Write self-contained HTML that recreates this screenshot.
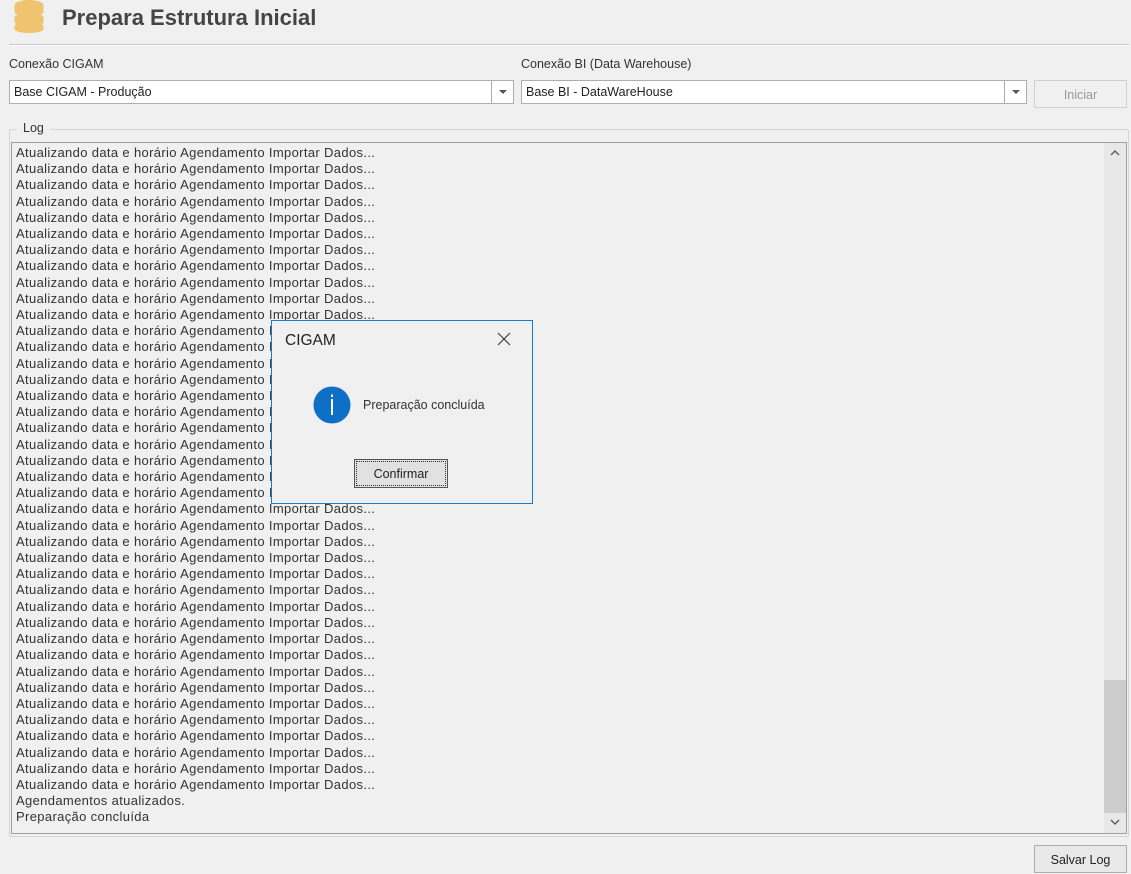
<!DOCTYPE html>
<html><head><meta charset="utf-8">
<style>
*{box-sizing:border-box;margin:0;padding:0}
body{width:1131px;height:874px;background:#f0f0f0;font-family:"Liberation Sans",sans-serif;font-size:12px;color:#222;position:relative;overflow:hidden}
.abs{position:absolute}
.title{left:62px;top:5px;font-size:22px;font-weight:bold;color:#444}
.hr{left:9px;top:44px;width:1120px;height:2px;border-top:1px solid #c8c8c8;border-bottom:1px solid #fff}
.lbl{font-size:12.5px;color:#333}
.combo{height:24px;background:#fff;border:1px solid #abadb3;font-size:12.5px;padding:4px 0 0 4px}
.combo .dd{position:absolute;right:0;top:0;width:22px;height:22px;border-left:1px solid #abadb3}
.combo .dd:after{content:"";position:absolute;left:7px;top:9px;border-left:4px solid transparent;border-right:4px solid transparent;border-top:4px solid #555}
.btn{border:1px solid #adadad;background:#e9e9e9;text-align:center;font-size:12.5px}
.log{left:11px;top:142px;width:1116px;height:692px;border:1px solid #a0a0a0;background:#f0f0f0}
.lines{position:absolute;left:4px;top:2px;line-height:16.2px;font-size:13px;letter-spacing:0.35px;color:#333;white-space:pre}
.sb{position:absolute;right:0;top:0;width:22px;height:690px;background:#e8e8e8}
</style></head><body>
<svg class="abs" style="left:14px;top:0px" width="30" height="34" viewBox="0 0 30 34">
<g fill="#efc36f"><ellipse cx="15" cy="5" rx="14.5" ry="5"/><rect x="0.5" y="5" width="29" height="7"/><ellipse cx="15" cy="12" rx="14.5" ry="4"/>
<ellipse cx="15" cy="17" rx="14.5" ry="4"/><rect x="0.5" y="17" width="29" height="5"/><ellipse cx="15" cy="22" rx="14.5" ry="4"/>
<ellipse cx="15" cy="26" rx="14.5" ry="4"/><rect x="0.5" y="26" width="29" height="3"/><ellipse cx="15" cy="29" rx="14.5" ry="4"/></g></svg>
<div class="abs title">Prepara Estrutura Inicial</div>
<div class="abs hr"></div>
<div class="abs lbl" style="left:9px;top:57px">Conexão CIGAM</div>
<div class="abs lbl" style="left:521px;top:57px">Conexão BI (Data Warehouse)</div>
<div class="abs combo" style="left:9px;top:80px;width:505px">Base CIGAM - Produção<div class="dd"></div></div>
<div class="abs combo" style="left:521px;top:80px;width:506px">Base BI - DataWareHouse<div class="dd"></div></div>
<div class="abs btn" style="left:1034px;top:80px;width:93px;height:28px;padding-top:7px;color:#9a9a9a;border-color:#d0d0d0;background:#f0f0f0">Iniciar</div>
<div class="abs" style="left:9px;top:129px;width:1120px;height:708px;border:1px solid #d5d5d5;border-radius:2px"></div>
<div class="abs lbl" style="left:17px;top:121px;background:#f0f0f0;padding:0 6px">Log</div>
<div class="abs log">
<div class="lines" id="l"></div>
<div class="sb">
<svg class="abs" style="left:6px;top:6px" width="10" height="8"><path d="M1 6 L5 2 L9 6" stroke="#606060" stroke-width="1.5" fill="none"/></svg>
<div class="abs" style="left:0;top:537px;width:22px;height:133px;background:#cdcdcd"></div>
<svg class="abs" style="left:6px;top:675px" width="10" height="8"><path d="M1 2 L5 6 L9 2" stroke="#606060" stroke-width="1.5" fill="none"/></svg>
</div></div>
<div class="abs btn" style="left:1034px;top:845px;width:93px;height:28px;padding-top:7px;color:#222">Salvar Log</div>
<div class="abs" style="left:271px;top:320px;width:262px;height:184px;border:1px solid #1979ca;background:#f0f0f0">
<div class="abs" style="left:13px;top:11px;font-size:15.5px;color:#222">CIGAM</div>
<svg class="abs" style="left:225px;top:11px" width="14" height="14"><path d="M1 1 L13 13 M13 1 L1 13" stroke="#444" stroke-width="1.2"/></svg>
<svg class="abs" style="left:41px;top:65px" width="38" height="38"><circle cx="19" cy="19" r="18.5" fill="#0e6fc7"/><rect x="18" y="13" width="2" height="16" fill="#fff"/><rect x="18" y="8.5" width="2" height="2.5" fill="#fff"/></svg>
<div class="abs" style="left:91px;top:77px;font-size:12.5px;color:#333">Preparação concluída</div>
<div class="abs" style="left:82px;top:138px;width:94px;height:29px;border:1px solid #555;background:#e1e1e1;padding:1px">
<div style="border:1px dotted #333;height:100%;text-align:center;padding-top:5px;font-size:12.5px;color:#222">Confirmar</div></div>
</div>
<script>
var s="";for(var i=0;i<40;i++)s+="Atualizando data e horário Agendamento Importar Dados...\n";
s+="Agendamentos atualizados.\nPreparação concluída";
document.getElementById("l").textContent=s;
</script>
</body></html>
